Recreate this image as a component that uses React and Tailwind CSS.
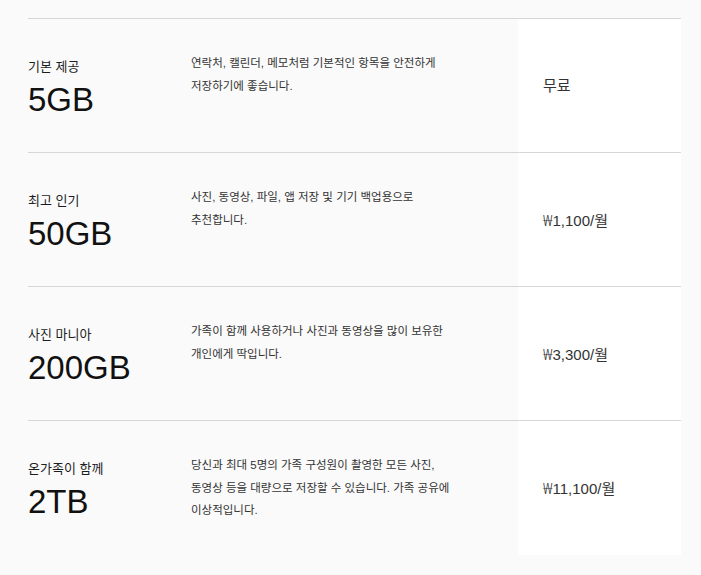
const plans = [
  {
    label: '기본 제공',
    size: '5GB',
    desc: ['연락처, 캘린더, 메모처럼 기본적인 항목을 안전하게', '저장하기에 좋습니다.'],
    price: '무료',
  },
  {
    label: '최고 인기',
    size: '50GB',
    desc: ['사진, 동영상, 파일, 앱 저장 및 기기 백업용으로', '추천합니다.'],
    price: '1,100/월',
    won: true,
  },
  {
    label: '사진 마니아',
    size: '200GB',
    desc: ['가족이 함께 사용하거나 사진과 동영상을 많이 보유한', '개인에게 딱입니다.'],
    price: '3,300/월',
    won: true,
  },
  {
    label: '온가족이 함께',
    size: '2TB',
    desc: ['당신과 최대 5명의 가족 구성원이 촬영한 모든 사진,', '동영상 등을 대량으로 저장할 수 있습니다. 가족 공유에', '이상적입니다.'],
    price: '11,100/월',
    won: true,
  },
]

const App = () => {
  return (
    <div
      className="min-h-[575px] bg-[#fafafa] pt-[18px] px-[28px] text-[#1d1d1f]"
      style={{ fontFamily: '"Liberation Sans", "Noto Sans CJK KR", sans-serif' }}
    >
      <div className="w-[653px] border-t border-[#d6d6d6]">
        {plans.map((plan, idx) => (
          <div
            key={plan.size}
            className={`grid grid-cols-[163px_327px_163px] h-[134px] ${idx < plans.length - 1 ? 'border-b border-[#d6d6d6]' : ''}`}
          >
            {/* Plan name + storage */}
            <div className="pt-[39px]">
              <p className="text-[13px] leading-[18px]">{plan.label}</p>
              <p className="mt-[5px] text-[33px] leading-[38px] text-[#111]">{plan.size}</p>
            </div>

            {/* Description */}
            <div className="pt-[33px] text-[11.5px] leading-[22.5px] text-[#333]">
              {plan.desc.map((line, i) => (
                <p key={i}>{line}</p>
              ))}
            </div>

            {/* Price */}
            <div className="bg-white flex items-center pl-[25px] pt-[2px]">
              <span className="text-[15px] text-[#333]">
                {plan.won && <span className="font-['Noto_Sans'] font-light">₩</span>}
                {plan.price}
              </span>
            </div>
          </div>
        ))}
      </div>
    </div>
  )
}

export default App
